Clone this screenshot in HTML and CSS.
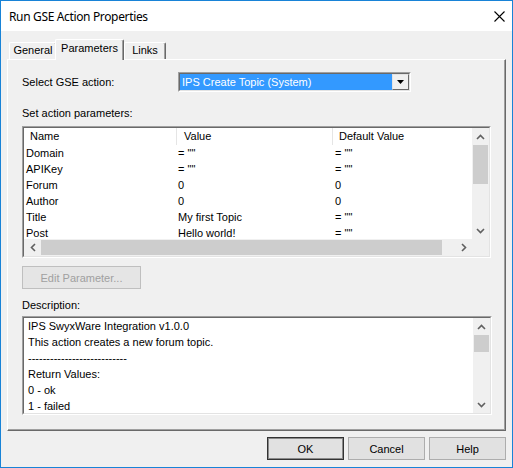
FILE: index.html
```html
<!DOCTYPE html>
<html>
<head>
<meta charset="utf-8">
<link rel="stylesheet" href="styles.css">
</head>
<body>
<div class="window">
  <div class="titlebar">
    <span class="title">Run GSE Action Properties</span>
    <svg class="close" width="11" height="11" viewBox="0 0 11 11"><path d="M0.5 0.5 L10.5 10.5 M10.5 0.5 L0.5 10.5" stroke="#000" stroke-width="1.1" fill="none"/></svg>
  </div>
  <div class="client">
    <div class="tabs">
      <div class="tab tab-general">General</div>
      <div class="tab tab-params active">Parameters</div>
      <div class="tab tab-links">Links</div>
    </div>
    <div class="panel">
      <div class="row-select">
        <span class="row-label">Select GSE action:</span>
        <div class="sunken combo">
          <div class="sunken-inner combo-inner">
            <div class="combo-value">IPS Create Topic (System)</div>
            <div class="combo-btn"><svg width="7" height="4" viewBox="0 0 7 4"><path d="M0 0 H7 L3.5 4 Z" fill="#000"/></svg></div>
          </div>
        </div>
      </div>
      <div class="label label-params">Set action parameters:</div>
      <div class="sunken listview">
        <div class="sunken-inner lv-grid">
          <div class="lv-content">
            <div class="lv-row lv-header">
              <div class="col c1">Name</div>
              <div class="col c2">Value</div>
              <div class="col c3">Default Value</div>
            </div>
            <div class="lv-row"><div class="col c1">Domain</div><div class="col c2">= ""</div><div class="col c3">= ""</div></div>
            <div class="lv-row"><div class="col c1">APIKey</div><div class="col c2">= ""</div><div class="col c3">= ""</div></div>
            <div class="lv-row"><div class="col c1">Forum</div><div class="col c2">0</div><div class="col c3">0</div></div>
            <div class="lv-row"><div class="col c1">Author</div><div class="col c2">0</div><div class="col c3">0</div></div>
            <div class="lv-row"><div class="col c1">Title</div><div class="col c2">My first Topic</div><div class="col c3">= ""</div></div>
            <div class="lv-row"><div class="col c1">Post</div><div class="col c2">Hello world!</div><div class="col c3">= ""</div></div>
          </div>
          <div class="vscroll">
            <div class="sb-btn"><svg width="9" height="6" viewBox="0 0 9 6"><path d="M1 5 L4.5 1.5 L8 5" stroke="#606060" stroke-width="1.6" fill="none"/></svg></div>
            <div class="vthumb"></div>
            <div class="sb-track"></div>
            <div class="sb-btn"><svg width="9" height="6" viewBox="0 0 9 6"><path d="M1 1 L4.5 4.5 L8 1" stroke="#606060" stroke-width="1.6" fill="none"/></svg></div>
          </div>
          <div class="hscroll">
            <div class="sb-btn"><svg width="6" height="9" viewBox="0 0 6 9"><path d="M5 1 L1.5 4.5 L5 8" stroke="#606060" stroke-width="1.6" fill="none"/></svg></div>
            <div class="hthumb"></div>
            <div class="sb-track"></div>
            <div class="sb-btn"><svg width="6" height="9" viewBox="0 0 6 9"><path d="M1 1 L4.5 4.5 L1 8" stroke="#606060" stroke-width="1.6" fill="none"/></svg></div>
          </div>
          <div class="corner"></div>
        </div>
      </div>
      <button class="btn btn-edit" disabled>Edit Parameter...</button>
      <div class="label label-desc">Description:</div>
      <div class="sunken desc">
        <div class="sunken-inner desc-grid">
          <div class="desc-text">
            <div>IPS SwyxWare Integration v1.0.0</div>
            <div>This action creates a new forum topic.</div>
            <div>---------------------------</div>
            <div>Return Values:</div>
            <div>0 - ok</div>
            <div>1 - failed</div>
          </div>
          <div class="vscroll">
            <div class="sb-btn"><svg width="9" height="6" viewBox="0 0 9 6"><path d="M1 5 L4.5 1.5 L8 5" stroke="#606060" stroke-width="1.6" fill="none"/></svg></div>
            <div class="vthumb dthumb"></div>
            <div class="sb-track"></div>
            <div class="sb-btn"><svg width="9" height="6" viewBox="0 0 9 6"><path d="M1 1 L4.5 4.5 L8 1" stroke="#606060" stroke-width="1.6" fill="none"/></svg></div>
          </div>
        </div>
      </div>
    </div>
    <div class="buttons">
      <button class="btn btn-default">OK</button>
      <button class="btn">Cancel</button>
      <button class="btn">Help</button>
    </div>
  </div>
</div>
</body>
</html>
```

FILE: styles.css
```css
* { box-sizing: border-box; }
html, body { margin: 0; padding: 0; }
body {
  font-family: "Liberation Sans", Arial, sans-serif;
  font-size: 11px;
  color: #000;
  background: #fff;
}
.window {
  width: 513px;
  height: 468px;
  border: 1px solid #1883d7;
  background: #f0f0f0;
  display: flex;
  flex-direction: column;
}
.titlebar {
  height: 30px;
  flex: none;
  background: #fff;
  display: flex;
  align-items: center;
  justify-content: space-between;
  padding: 0 7px 0 8px;
}
.title {
  font-family: "Noto Sans", "Open Sans", sans-serif;
  font-size: 12px;
  letter-spacing: -0.35px;
}
.close { display: block; }

.client {
  padding: 8px 6px 0 6px;
  display: flex;
  flex-direction: column;
}
.tabs {
  height: 20px;
  display: flex;
  align-items: flex-end;
  padding-left: 2px;
}
.tab {
  height: 17px;
  line-height: 15px;
  text-align: center;
  border-top: 1px solid #fff;
  border-left: 1px solid #fff;
  border-right: 1px solid #696969;
  box-shadow: inset -1px 0 0 #a0a0a0;
  border-radius: 2px 2px 0 0;
  background: #f0f0f0;
}
.tab-general { width: 48px; }
.tab-params { width: 69px; margin-left: -2px; }
.tab-links { width: 42px; }
.tab.active {
  height: 21px;
  line-height: 16px;
  margin-bottom: -1px;
  position: relative;
  z-index: 1;
}

.panel {
  height: 372px;
  border: 1px solid;
  border-color: #fff #696969 #696969 #fff;
  box-shadow: inset -1px -1px 0 #a0a0a0;
  padding: 12px 14px 0 14px;
  display: flex;
  flex-direction: column;
  align-items: flex-start;
}
.row-select {
  height: 20px;
  display: flex;
  align-items: center;
}
.row-label { width: 156px; }

.sunken {
  border: 1px solid;
  border-color: #a0a0a0 #fff #fff #a0a0a0;
}
.sunken-inner {
  height: 100%;
  border: 1px solid;
  border-color: #696969 #e3e3e3 #e3e3e3 #696969;
}
.combo { width: 233px; height: 20px; }
.combo-inner { display: flex; background: #fff; }
.combo-value {
  flex: 1;
  background: #3399ff;
  color: #fff;
  line-height: 16px;
  padding-left: 2px;
}
.combo-btn {
  width: 17px;
  height: 16px;
  background: #f0f0f0;
  border: 1px solid;
  border-color: #e3e3e3 #696969 #696969 #e3e3e3;
  display: flex;
  align-items: center;
  justify-content: center;
}
.combo-btn svg { display: block; }

.label { line-height: 13px; }
.label-params { margin-top: 15px; }
.listview { margin-top: 6px; width: 469px; height: 132px; }
.lv-grid {
  display: grid;
  grid-template-columns: 1fr 17px;
  grid-template-rows: 1fr 17px;
  background: #fff;
}
.lv-content { overflow: hidden; }
.lv-row {
  display: flex;
  height: 16px;
  line-height: 16px;
  white-space: nowrap;
}
.lv-header {
  height: 17px;
  line-height: 16px;
}
.col { overflow: hidden; flex: none; }
.c1 { width: 153px; padding-left: 2px; }
.c2 { width: 156px; padding-left: 1px; }
.c3 { width: 160px; padding-left: 2px; }
.lv-header .col { border-right: 1px solid #e5e5e5; }
.lv-header .c1 { padding-left: 6px; }
.lv-header .c2 { padding-left: 7px; }
.lv-header .c3 { padding-left: 6px; }

.vscroll {
  display: flex;
  flex-direction: column;
  background: #f0f0f0;
}
.hscroll {
  display: flex;
  background: #f0f0f0;
}
.sb-btn {
  width: 17px;
  height: 17px;
  flex: none;
  display: flex;
  align-items: center;
  justify-content: center;
}
.sb-btn svg { display: block; }
.sb-track { flex: 1; }
.vthumb { height: 39px; background: #cdcdcd; margin: 0 1px; }
.hthumb { width: 401px; background: #cdcdcd; margin: 1px 0; }
.corner { background: #f0f0f0; }

.btn {
  font-family: "Liberation Sans", Arial, sans-serif;
  font-size: 11px;
  color: #000;
  background: #e1e1e1;
  border: 1px solid #adadad;
  height: 23px;
  padding: 0;
  margin: 0;
}
.btn-edit {
  margin-top: 8px;
  width: 119px;
  background: #e5e5e5;
  border-color: #bfbfbf;
  color: #a0a0a0;
}
.label-desc { margin-top: 10px; }
.desc { margin-top: 4px; width: 470px; height: 99px; }
.desc-grid {
  display: grid;
  grid-template-columns: 1fr 17px;
  background: #fff;
}
.desc-text {
  padding-left: 4px;
  line-height: 16px;
  white-space: nowrap;
  overflow: hidden;
}
.dthumb { height: 17px; }

.buttons {
  display: flex;
  justify-content: flex-end;
  gap: 4px;
  margin-top: 6px;
}
.buttons .btn { width: 77px; }
.btn-default {
  border: 1px solid #333;
  box-shadow: inset 0 0 0 1px #8a8a8a;
}
```
